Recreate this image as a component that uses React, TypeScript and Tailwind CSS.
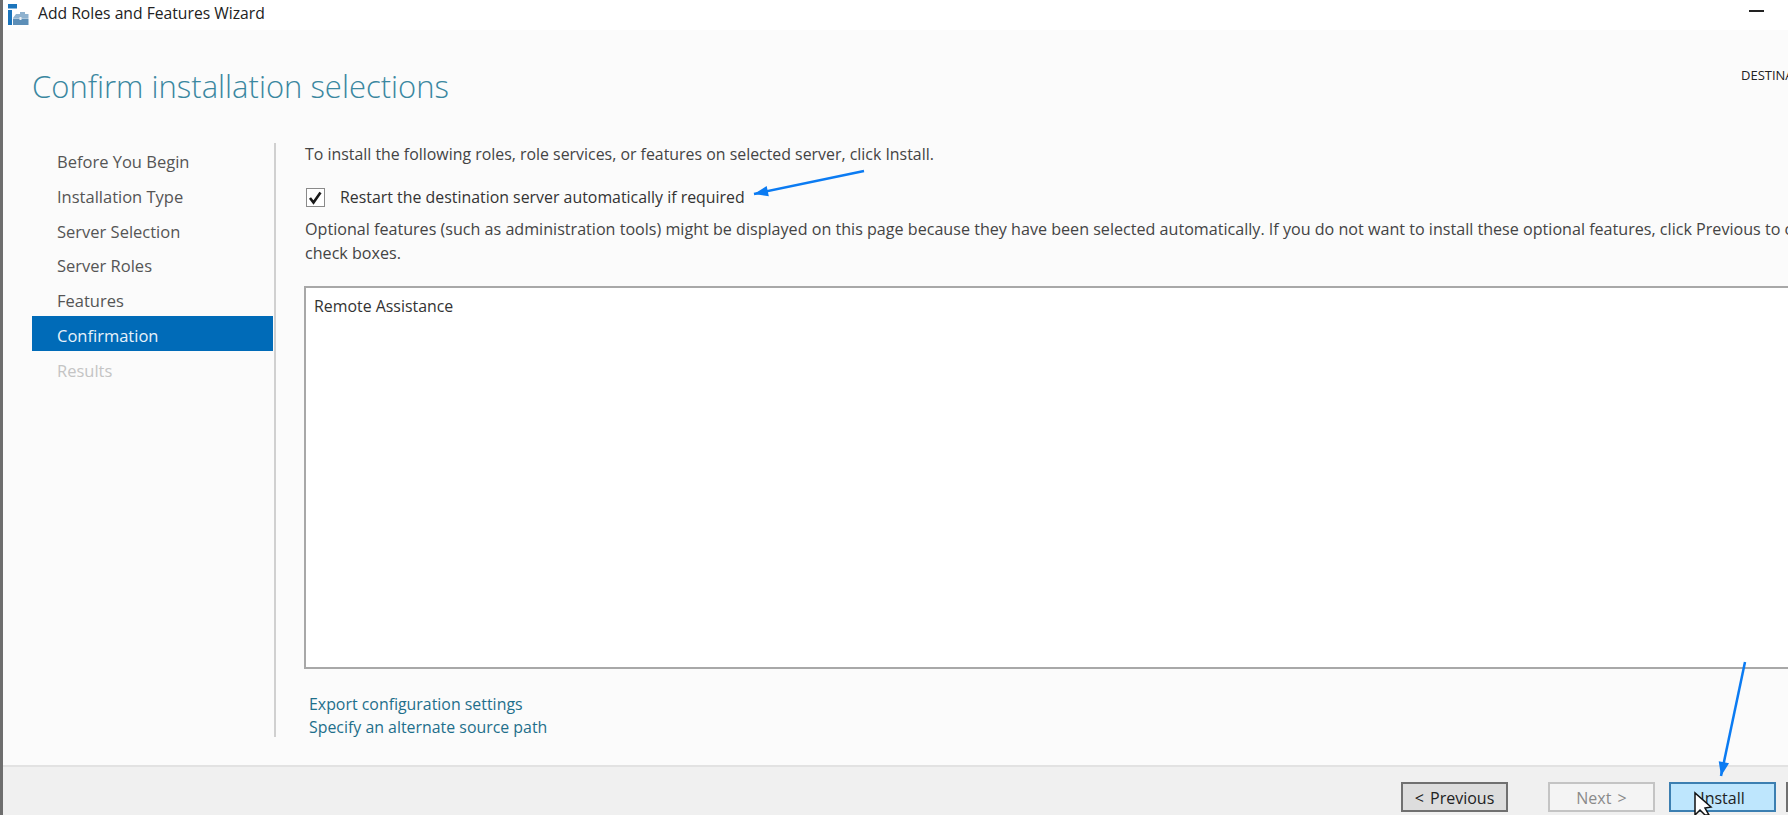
const font = "font-['Open_Sans','Noto_Sans',sans-serif]"

const steps = [
  { label: "Before You Begin", state: "normal" },
  { label: "Installation Type", state: "normal" },
  { label: "Server Selection", state: "normal" },
  { label: "Server Roles", state: "normal" },
  { label: "Features", state: "normal" },
  { label: "Confirmation", state: "active" },
  { label: "Results", state: "disabled" },
]

function WizardIcon() {
  return (
    <svg width="22" height="24" viewBox="0 0 22 24" className="shrink-0">
      <rect x="1" y="1" width="9" height="4.500" fill="#1c75bc" />
      <rect x="1" y="7" width="4" height="15" fill="#1c75bc" />
      <path d="M6 15 L9 11 H13 V9 H18 V11 H21.500 V15 Z" fill="#8fb2cf" />
      <rect x="6" y="15.500" width="15.500" height="6.500" fill="#5d8fb8" />
      <rect x="12.500" y="14" width="2" height="3" fill="#e8eef4" />
    </svg>
  )
}

function Arrow({ x1, y1, x2, y2 }: { x1: number; y1: number; x2: number; y2: number }) {
  const angle = Math.atan2(y2 - y1, x2 - x1)
  const head = 15
  const spread = 0.36
  const ax = x2 - head * Math.cos(angle - spread)
  const ay = y2 - head * Math.sin(angle - spread)
  const bx = x2 - head * Math.cos(angle + spread)
  const by = y2 - head * Math.sin(angle + spread)
  return (
    <g>
      <line x1={x1} y1={y1} x2={x2} y2={y2} stroke="#0b7bf2" strokeWidth="2.500" />
      <polygon points={`${x2},${y2} ${ax},${ay} ${bx},${by}`} fill="#0b7bf2" />
    </g>
  )
}

function WizardButton({ label, className }: { label: string; className: string }) {
  return (
    <div className={`flex h-[30px] w-[107px] shrink-0 items-center justify-center border-2 pt-[2px] text-[16px] [word-spacing:2px] ${className}`}>
      {label}
    </div>
  )
}

export default function App() {
  return (
    <div className={`relative flex h-[815px] w-[1788px] flex-col overflow-hidden border-l-[3px] border-[#6e6e6e] bg-white ${font}`}>
      {/* title bar */}
      <div className="flex h-[30px] shrink-0 items-center bg-white pl-[4px]">
        <WizardIcon />
        <span className="ml-[9px] -translate-y-[1px] text-[15.700px] leading-none text-[#222]">Add Roles and Features Wizard</span>
        <div className="mr-[24px] ml-auto h-[2px] w-[15px] -translate-y-[4px] bg-[#222]" />
      </div>

      {/* body */}
      <div className="flex min-h-0 flex-1 flex-col bg-[#fbfbfb]">
        <div className="flex h-[113px] shrink-0 items-start justify-between pt-[31px] pl-[29px]">
          <h1 className="text-[31px] leading-[50px] font-light whitespace-nowrap text-[#3a87a0]">
            Confirm installation selections
          </h1>
          <span className="mt-[4px] w-[47px] shrink-0 overflow-hidden text-[13px] leading-[20px] whitespace-nowrap text-[#222]">
            DESTINATION SERVER
          </span>
        </div>

        <div className="flex min-h-0 flex-1">
          {/* step list */}
          <div className="mb-[28px] w-[273px] shrink-0 border-r-2 border-[#d0d0d0] pl-[29px]">
            <div className="mt-[-1px] flex flex-col">
              {steps.map((step) => (
                <div
                  key={step.label}
                  className={`flex h-[34.8px] w-[241px] items-center pt-[6px] pl-[25px] text-[16.500px] ${
                    step.state === "active"
                      ? "bg-[#006bb8] text-[#e8f2fa]"
                      : step.state === "disabled"
                        ? "text-[#c4c4c4]"
                        : "text-[#555]"
                  }`}
                >
                  {step.label}
                </div>
              ))}
            </div>
          </div>

          {/* main column */}
          <div className="min-w-0 flex-1 pl-[29px] text-[15.900px] text-[#444]">
            <p className="mt-[-1px] leading-[24px] whitespace-nowrap">
              To install the following roles, role services, or features on selected server, click Install.
            </p>
            <div className="mt-[20px] ml-[1px] flex h-[24px] items-center">
              <div className="-translate-y-[1px] flex h-[19px] w-[19px] items-center justify-center border border-[#8a8a8a] bg-white">
                <svg width="15" height="15" viewBox="0 0 15 15">
                  <path d="M2 8 L5.500 12.500 L12.500 2.500" fill="none" stroke="#1a1a1a" strokeWidth="2.600" />
                </svg>
              </div>
              <span className="ml-[15px] whitespace-nowrap text-[#333]">Restart the destination server automatically if required</span>
            </div>
            <p className="mt-[7px] text-[16.130px] leading-[24px] whitespace-nowrap">
              Optional features (such as administration tools) might be displayed on this page because they have been
              selected automatically. If you do not want to install these optional features, click Previous to clear their
              <br />
              check boxes.
            </p>
            <div className="mt-[21px] ml-[-1px] h-[383px] border-2 border-r-0 border-[#a8a8a8] bg-white px-[8px] pt-[6px] text-[#333]">
              <span className="leading-[24px]">Remote Assistance</span>
            </div>
            <div className="mt-[24px] flex flex-col pl-[4px] leading-[23px] text-[#1f6f8b]">
              <span>Export configuration settings</span>
              <span>Specify an alternate source path</span>
            </div>
          </div>
        </div>
      </div>

      {/* footer */}
      <div className="flex h-[50px] shrink-0 items-end gap-[13px] border-t-2 border-[#e2e2e2] bg-[#f0f0f0] pb-[3px] pl-[1398px]">
        <WizardButton label="< Previous" className="border-[#707070] bg-[#dddddd] text-[#222]" />
        <WizardButton label="Next >" className="ml-[27px] border-[#c4c4c4] bg-[#f4f4f4] text-[#8a8a8a]" />
        <WizardButton label="Install" className="ml-[1px] border-[#3c7fb1] bg-[#bee6fd] text-[#222]" />
        <div className="ml-[-3px] h-[30px] w-[4px] border-l-2 border-[#707070] bg-[#dddddd]" />
      </div>

      {/* annotations drawn on top of the screenshot */}
      <svg className="pointer-events-none absolute top-0 -left-[3px]" width="1788" height="815">
        <Arrow x1={864} y1={171} x2={754} y2={194} />
        <Arrow x1={1745} y1={662} x2={1721} y2={776} />
        <path
          d="M1695 793 L1695 815 L1700 810 L1705 815 L1709 815 L1705 808 L1711 807 Z"
          fill="#fff"
          stroke="#111"
          strokeWidth="1.500"
        />
      </svg>
    </div>
  )
}
